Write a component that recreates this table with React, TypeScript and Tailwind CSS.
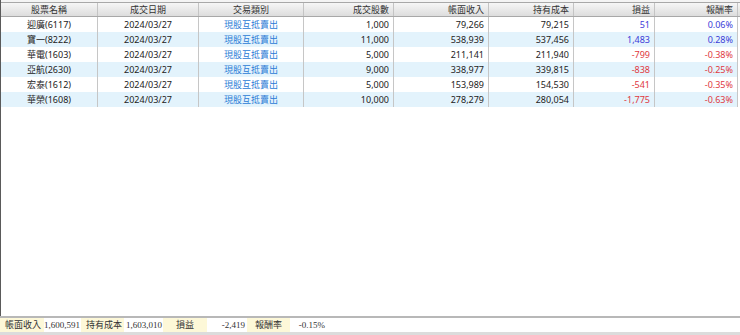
import React from 'react';

const cols = [
  { key: 'name', title: '股票名稱', w: 'w-[97px]', align: 'center' },
  { key: 'date', title: '成交日期', w: 'w-[101px]', align: 'center' },
  { key: 'type', title: '交易類別', w: 'w-[105px]', align: 'center' },
  { key: 'qty', title: '成交股數', w: 'w-[90px]', align: 'right' },
  { key: 'income', title: '帳面收入', w: 'w-[95px]', align: 'right' },
  { key: 'cost', title: '持有成本', w: 'w-[85px]', align: 'right' },
  { key: 'pl', title: '損益', w: 'w-[81px]', align: 'right' },
  { key: 'rate', title: '報酬率', w: 'w-[83px]', align: 'right' },
];

const rows = [
  { name: '迎廣(6117)', date: '2024/03/27', type: '現股互抵賣出', qty: '1,000', income: '79,266', cost: '79,215', pl: '51', rate: '0.06%' },
  { name: '寶一(8222)', date: '2024/03/27', type: '現股互抵賣出', qty: '11,000', income: '538,939', cost: '537,456', pl: '1,483', rate: '0.28%' },
  { name: '華電(1603)', date: '2024/03/27', type: '現股互抵賣出', qty: '5,000', income: '211,141', cost: '211,940', pl: '-799', rate: '-0.38%' },
  { name: '亞航(2630)', date: '2024/03/27', type: '現股互抵賣出', qty: '9,000', income: '338,977', cost: '339,815', pl: '-838', rate: '-0.25%' },
  { name: '宏泰(1612)', date: '2024/03/27', type: '現股互抵賣出', qty: '5,000', income: '153,989', cost: '154,530', pl: '-541', rate: '-0.35%' },
  { name: '華榮(1608)', date: '2024/03/27', type: '現股互抵賣出', qty: '10,000', income: '278,279', cost: '280,054', pl: '-1,775', rate: '-0.63%' },
];

const cellColor = (key: string, value: string) => {
  if (key === 'type') return 'text-[#2b7bd6]';
  if (key === 'pl' || key === 'rate') return value.startsWith('-') ? 'text-[#e0383e]' : 'text-[#3b3bd8]';
  return 'text-[#222]';
};

const App: React.FC = () => {
  return (
    <div className="w-[740px] h-[335px] bg-white overflow-hidden flex flex-col text-[9px] font-['Noto_Sans','Noto_Sans_CJK_TC',sans-serif]">
      <div className="flex-1 flex flex-col border-l border-[#5a5a5a] min-h-0">
        <div className="h-[2px] bg-[#f4f4f4]"></div>
        {/* header */}
        <div className="flex h-[15px] border-t border-b border-[#a8a8a8] bg-gradient-to-b from-[#f6f6f6] to-[#dddddd] text-[#333] leading-[13px]">
          {cols.map((c) => (
            <div
              key={c.key}
              className={`${c.w} shrink-0 border-r border-[#c4c4c4] px-[4px] overflow-hidden whitespace-nowrap ${c.align === 'center' ? 'text-center' : 'text-right'}`}
            >
              {c.title}
            </div>
          ))}
          <div className="flex-1 pl-[1px] overflow-hidden whitespace-nowrap">日</div>
        </div>
        {/* rows */}
        {rows.map((r, i) => (
          <div
            key={r.name}
            className={`flex h-[15px] leading-[15px] ${i % 2 === 1 ? 'bg-[#e3f3fc]' : 'bg-white'}`}
          >
            {cols.map((c) => {
              const v = (r as any)[c.key] as string;
              return (
                <div
                  key={c.key}
                  className={`${c.w} shrink-0 border-r border-[#c6c6c6] px-[4px] overflow-hidden whitespace-nowrap ${c.align === 'center' ? 'text-center' : 'text-right'} ${cellColor(c.key, v)}`}
                >
                  {v}
                </div>
              );
            })}
            <div className="flex-1 bg-white"></div>
          </div>
        ))}
        <div className="flex-1"></div>
      </div>
      {/* footer */}
      <div className="h-[2px] bg-[#b8b8b8]"></div>
      <div className="flex h-[14px] bg-white text-[9px] leading-[14px] text-[#333] font-['Liberation_Serif','Noto_Sans_CJK_TC',serif]">
        <div className="w-[44px] h-full bg-[#fdf8d8] pl-[5px] font-['Noto_Sans_CJK_TC',sans-serif]">帳面收入</div>
        <div className="w-[37px] text-right pr-[3px]">1,600,591</div>
        <div className="w-[43px] h-full bg-[#fdf8d8] pl-[5px] font-['Noto_Sans_CJK_TC',sans-serif]">持有成本</div>
        <div className="w-[39px] text-right pr-[1px]">1,603,010</div>
        <div className="w-[44px] h-full bg-[#fdf8d8] text-center font-['Noto_Sans_CJK_TC',sans-serif]">損益</div>
        <div className="w-[40px] text-right pr-[2px]">-2,419</div>
        <div className="w-[43px] h-full bg-[#fdf8d8] pl-[8px] font-['Noto_Sans_CJK_TC',sans-serif]">報酬率</div>
        <div className="w-[37px] text-right pr-[2px]">-0.15%</div>
        <div className="flex-1"></div>
      </div>
      <div className="h-[3px] bg-[#dcdcdc]"></div>
    </div>
  );
};

export default App;
